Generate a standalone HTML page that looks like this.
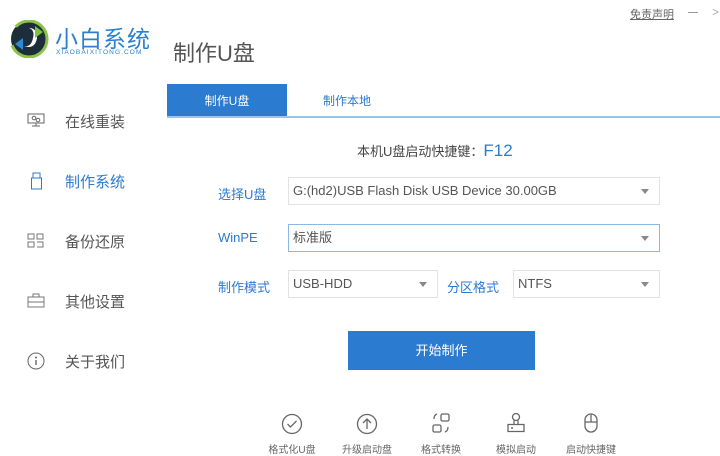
<!DOCTYPE html><html><head><meta charset="utf-8"><style>
*{margin:0;padding:0;box-sizing:border-box}
body{width:720px;height:451px;overflow:hidden;background:#fff;font-family:"Liberation Sans","Noto Sans CJK SC",sans-serif;position:relative;color:#555}
.a{position:absolute}
.nav{left:65px;font-size:15px;color:#555}
.ic{left:27px}
.lbl{font-size:13px;color:#2b7bd1}
.box{border:1px solid #e3e3e3;height:28px;font-size:13px;color:#555;padding-left:4px;line-height:26px}
.box:after{content:"";position:absolute;right:10px;top:11px;border-left:4px solid transparent;border-right:4px solid transparent;border-top:5px solid #888}
.bi{font-size:10px;color:#666;text-align:center;width:70px}
</style></head><body>
<svg class="a" style="left:9px;top:20px" width="40" height="38" viewBox="0 0 40 38"><circle cx="20" cy="19" r="18" fill="#1e2d3a"/><circle cx="20" cy="19" r="18" fill="none" stroke="#8bc34a" stroke-width="3" stroke-dasharray="50 20"/><path d="M14 26 q8 2 10 -8 q2 -8 -4 -10 q8 0 8 10 q-2 12 -14 8z" fill="#fff"/><path d="M6 24 l8 -6 l0 12z" fill="#2b8ad6"/><path d="M34 12 l-8 6 l0 -12z" fill="#7cc242"/></svg>
<div class="a" style="left:55px;top:20px;font-size:23px;color:#2a7fd4;letter-spacing:1px">小白系统</div>
<div class="a" style="left:56px;top:49px;font-size:6.5px;color:#2a7fd4;letter-spacing:1.1px">XIAOBAIXITONG.COM</div>
<div class="a" style="left:173px;top:36px;font-size:22px;color:#555">制作U盘</div>
<div class="a" style="left:630px;top:6px;font-size:11px;color:#666;text-decoration:underline">免责声明</div>
<div class="a" style="left:688px;top:12px;width:10px;height:1px;background:#999"></div>
<div class="a" style="left:712px;top:5px;font-size:12px;color:#aaa">&gt;</div>

<svg class="a ic" style="top:113px" width="18" height="14" viewBox="0 0 18 14"><rect x="1" y="1" width="16" height="9" fill="none" stroke="#666"/><circle cx="7" cy="5" r="1.8" fill="none" stroke="#666"/><circle cx="11" cy="7" r="1.8" fill="none" stroke="#666"/><path d="M9 10v3M5 13h8" stroke="#666"/></svg>
<div class="a nav" style="top:111px">在线重装</div>
<svg class="a ic" style="top:172px;left:30px" width="14" height="18" viewBox="0 0 14 18"><rect x="3" y="1" width="7" height="5" fill="none" stroke="#2b7bd1"/><rect x="1.5" y="6" width="10" height="11" fill="none" stroke="#2b7bd1"/></svg>
<div class="a nav" style="top:171px;color:#2b7bd1">制作系统</div>
<svg class="a ic" style="top:233px" width="18" height="16" viewBox="0 0 18 16"><rect x="1" y="1" width="6" height="5" fill="none" stroke="#777"/><rect x="10" y="1" width="6" height="5" fill="none" stroke="#777"/><rect x="1" y="9" width="6" height="5" fill="none" stroke="#777"/><path d="M10 9h6v5h-6" fill="none" stroke="#777"/></svg>
<div class="a nav" style="top:231px">备份还原</div>
<svg class="a ic" style="top:293px" width="18" height="16" viewBox="0 0 18 16"><rect x="1" y="4" width="16" height="10" fill="none" stroke="#777"/><path d="M6 4V1h6v3M1 9h16" fill="none" stroke="#777"/></svg>
<div class="a nav" style="top:291px">其他设置</div>
<svg class="a ic" style="top:352px" width="18" height="18" viewBox="0 0 18 18"><circle cx="9" cy="9" r="8" fill="none" stroke="#666"/><path d="M9 8v5" stroke="#666" stroke-width="1.4"/><circle cx="9" cy="5.5" r="1" fill="#666"/></svg>
<div class="a nav" style="top:351px">关于我们</div>

<div class="a" style="left:167px;top:84px;width:120px;height:34px;background:#2b7bd1;color:#fff;font-size:12px;text-align:center;line-height:34px">制作U盘</div>
<div class="a" style="left:287px;top:84px;width:120px;height:34px;color:#2b7bd1;font-size:12px;text-align:center;line-height:34px">制作本地</div>
<div class="a" style="left:167px;top:116px;width:553px;height:2px;background:#9cc3ea"></div>

<div class="a" style="left:357px;top:141px;font-size:13px;color:#444">本机U盘启动快捷键：<span style="color:#2b7bd1;font-size:17px">F12</span></div>

<div class="a lbl" style="left:218px;top:184px">选择U盘</div>
<div class="a box" style="left:288px;top:177px;width:372px">G:(hd2)USB Flash Disk USB Device 30.00GB</div>
<div class="a lbl" style="left:218px;top:230px">WinPE</div>
<div class="a box" style="left:288px;top:224px;width:372px;border-color:#8ab7e6">标准版</div>
<div class="a lbl" style="left:218px;top:277px">制作模式</div>
<div class="a box" style="left:288px;top:270px;width:150px">USB-HDD</div>
<div class="a lbl" style="left:447px;top:277px">分区格式</div>
<div class="a box" style="left:513px;top:270px;width:147px">NTFS</div>

<div class="a" style="left:348px;top:331px;width:187px;height:39px;background:#2b7bd1;color:#fff;font-size:13px;text-align:center;line-height:39px">开始制作</div>

<svg class="a" style="left:281px;top:413px" width="22" height="22" viewBox="0 0 22 22"><circle cx="11" cy="11" r="9.5" fill="none" stroke="#666" stroke-width="1.3"/><path d="M6.5 11l3 3 6-6" fill="none" stroke="#666" stroke-width="1.3"/></svg>
<svg class="a" style="left:356px;top:413px" width="22" height="22" viewBox="0 0 22 22"><circle cx="11" cy="11" r="9.5" fill="none" stroke="#666" stroke-width="1.3"/><path d="M11 16V6M7 10l4-4 4 4" fill="none" stroke="#666" stroke-width="1.3"/></svg>
<svg class="a" style="left:430px;top:412px" width="22" height="22" viewBox="0 0 22 22"><rect x="11" y="2" width="8" height="7" rx="1.5" fill="none" stroke="#666" stroke-width="1.3"/><rect x="3" y="13" width="8" height="7" rx="1.5" fill="none" stroke="#666" stroke-width="1.3"/><path d="M7 2q-3 1-3 5M15 20q3-1 3-5" fill="none" stroke="#666" stroke-width="1.3"/></svg>
<svg class="a" style="left:505px;top:412px" width="22" height="22" viewBox="0 0 22 22"><circle cx="11" cy="5" r="3.5" fill="none" stroke="#666" stroke-width="1.3"/><path d="M9 8.5v4M13 8.5v4M3 12.5h16v7H3z" fill="none" stroke="#666" stroke-width="1.3"/><circle cx="7" cy="16" r="1" fill="#666"/></svg>
<svg class="a" style="left:580px;top:412px" width="22" height="22" viewBox="0 0 22 22"><rect x="5" y="2" width="12" height="18" rx="6" fill="none" stroke="#666" stroke-width="1.3"/><path d="M5 10h12M11 2v8" stroke="#666" stroke-width="1.3"/></svg>
<div class="a bi" style="left:257px;top:441px">格式化U盘</div>
<div class="a bi" style="left:332px;top:441px">升级启动盘</div>
<div class="a bi" style="left:406px;top:441px">格式转换</div>
<div class="a bi" style="left:481px;top:441px">模拟启动</div>
<div class="a bi" style="left:556px;top:441px">启动快捷键</div>
</body></html>
